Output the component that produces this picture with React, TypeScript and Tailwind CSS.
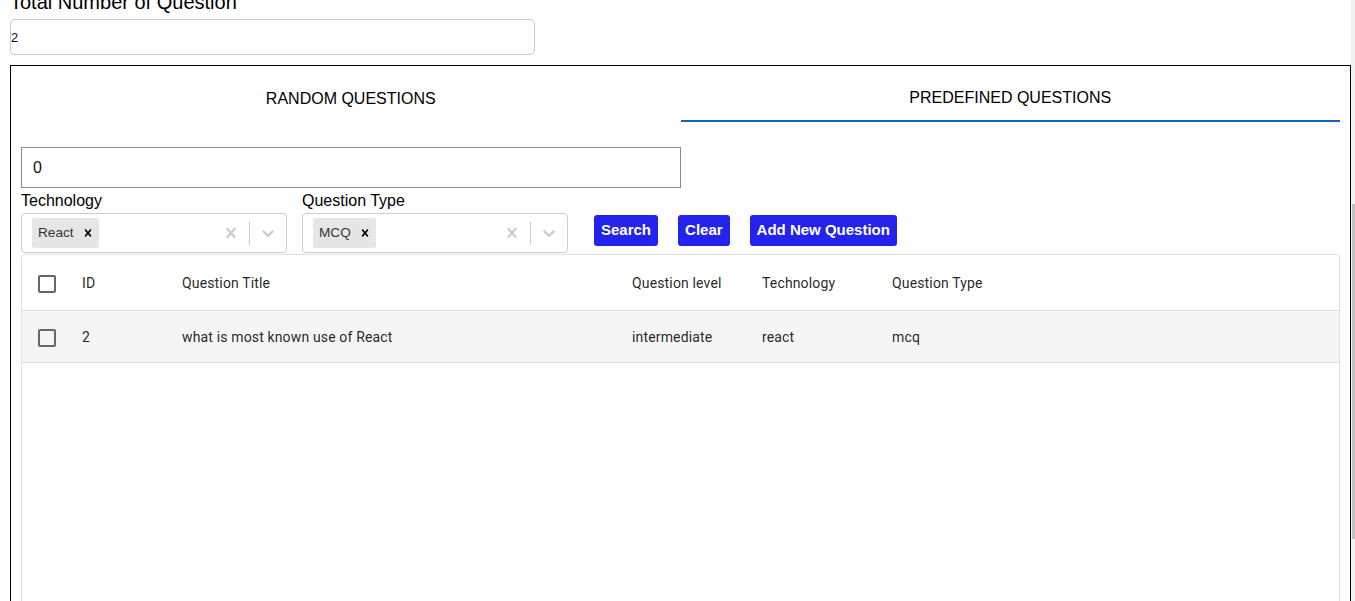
import React from 'react';

const CrossIcon = ({ size = 20, className = '' }: { size?: number; className?: string }) => (
  <svg width={size} height={size} viewBox="0 0 20 20" className={className} fill="currentColor">
    <path d="M14.348 14.849c-0.469 0.469-1.229 0.469-1.697 0l-2.651-3.030-2.651 3.029c-0.469 0.469-1.229 0.469-1.697 0-0.469-0.469-0.469-1.229 0-1.697l2.758-3.15-2.759-3.152c-0.469-0.469-0.469-1.228 0-1.697s1.228-0.469 1.697 0l2.652 3.031 2.651-3.031c0.469-0.469 1.228-0.469 1.697 0s0.469 1.229 0 1.697l-2.758 3.152 2.758 3.15c0.469 0.469 0.469 1.229 0 1.698z" />
  </svg>
);

const ChevronIcon = () => (
  <svg width={20} height={20} viewBox="0 0 20 20" fill="currentColor">
    <path d="M4.516 7.548c0.436-0.446 1.043-0.481 1.576 0l3.908 3.747 3.908-3.747c0.533-0.481 1.141-0.446 1.574 0 0.436 0.445 0.408 1.197 0 1.615-0.406 0.418-4.695 4.502-4.695 4.502-0.217 0.223-0.502 0.335-0.787 0.335s-0.57-0.112-0.789-0.335c0 0-4.287-4.084-4.695-4.502s-0.436-1.17 0-1.615z" />
  </svg>
);

const Checkbox = () => (
  <svg width={24} height={24} viewBox="0 0 24 24" className="text-[#666]" fill="currentColor">
    <path d="M19 5v14H5V5h14m0-2H5c-1.1 0-2 .9-2 2v14c0 1.1.9 2 2 2h14c1.1 0 2-.9 2-2V5c0-1.1-.9-2-2-2z" />
  </svg>
);

function MultiSelect({ label, value }: { label: string; value: string }) {
  return (
    <div className="w-[266px]">
      <div className="text-[16px] leading-[20px] mt-[3px] mb-[2px] text-black">{label}</div>
      <div className="h-[40px] border border-[#ccc] rounded-[4px] bg-white flex items-center">
        <div className="flex-1 pl-[10px] flex items-center">
          <div className="h-[30px] bg-[#e6e6e6] rounded-[2px] flex items-center">
            <span className="pl-[6px] pr-[6px] text-[13.6px] text-[#333]">{value}</span>
            <span className="pl-[1px] pr-[4px] text-black">
              <CrossIcon size={14} />
            </span>
          </div>
        </div>
        <div className="flex items-center text-[#ccc]">
          <div className="px-[8px]">
            <CrossIcon />
          </div>
          <span className="w-[1px] h-[23px] bg-[#ccc]" />
          <div className="px-[8px]">
            <ChevronIcon />
          </div>
        </div>
      </div>
    </div>
  );
}

const columns = [
  { key: 'id', title: 'ID', w: 'w-[100px]' },
  { key: 'title', title: 'Question Title', w: 'w-[450px]' },
  { key: 'level', title: 'Question level', w: 'w-[130px]' },
  { key: 'tech', title: 'Technology', w: 'w-[130px]' },
  { key: 'type', title: 'Question Type', w: 'w-[130px]' },
];

const rows = [
  { id: '2', title: 'what is most known use of React', level: 'intermediate', tech: 'react', type: 'mcq' },
];

export default function App() {
  return (
    <div className="w-full h-[601px] overflow-hidden bg-white flex font-[Liberation_Sans,Arial,sans-serif]">
      <div className="flex-1 pl-[10px]">
        <div className="mt-[-9px] text-[20px] leading-[23px] text-black">Total Number of Question</div>
        <input
          readOnly
          defaultValue="2"
          className="mt-[5px] block w-[525px] h-[36px] border border-[#c8c8c8] rounded-[5px] text-[13px] text-[#111] outline-none"
        />

        <div className="mt-[10px] border border-black p-[10px] pb-0">
          {/* Tabs */}
          <div className="grid grid-cols-2 h-[46px]">
            <div className="flex items-center justify-center text-[16px] text-black">RANDOM QUESTIONS</div>
            <div className="relative flex items-center justify-center pb-[3px] text-[16px] text-black">
              PREDEFINED QUESTIONS
              <span className="absolute left-0 right-0 bottom-0 h-[2px] bg-[#1565c0]" />
            </div>
          </div>

          <input
            readOnly
            defaultValue="0"
            className="mt-[25px] block w-[660px] h-[41px] border border-[#8a8a8a] pl-[11px] text-[16px] text-[#111] outline-none"
          />

          {/* Filters */}
          <div className="flex items-start">
            <MultiSelect label="Technology" value="React" />
            <div className="ml-[15px]">
              <MultiSelect label="Question Type" value="MCQ" />
            </div>
            <div className="ml-[26px] mt-[27px] flex gap-[20px]">
              {['Search', 'Clear', 'Add New Question'].map((b) => (
                <button
                  key={b}
                  className="h-[31px] px-[7px] rounded-[3px] bg-[#2323ec] text-white text-[15px] font-bold"
                >
                  {b}
                </button>
              ))}
            </div>
          </div>

          {/* Table */}
          <div className="mt-[1px] h-[400px] border border-[#e0e0e0] rounded-[4px] font-[Roboto,Arial,sans-serif] text-[14px] tracking-[0.01071em] text-[rgba(0,0,0,0.87)]">
            <div className="h-[56px] pt-[2px] border-b border-[#e0e0e0] flex items-center">
              <div className="w-[50px] flex justify-center">
                <Checkbox />
              </div>
              {columns.map((c) => (
                <div key={c.key} className={`${c.w} px-[10px]`}>
                  {c.title}
                </div>
              ))}
            </div>
            {rows.map((r) => (
              <div key={r.id} className="h-[52px] pt-[2px] border-b border-[#e0e0e0] bg-[#f5f5f5] flex items-center">
                <div className="w-[50px] flex justify-center">
                  <Checkbox />
                </div>
                {columns.map((c) => (
                  <div key={c.key} className={`${c.w} px-[10px]`}>
                    {r[c.key as keyof typeof r]}
                  </div>
                ))}
              </div>
            ))}
          </div>
        </div>
      </div>

      {/* page scrollbar */}
      <div className="w-[4px] bg-[#f1f1f1]">
        <div className="mt-[204px] ml-[1px] h-[335px] bg-[#c1c1c1]" />
      </div>
    </div>
  );
}
